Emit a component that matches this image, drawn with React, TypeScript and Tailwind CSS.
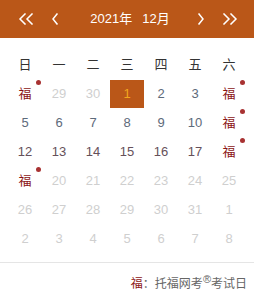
import React from 'react';

type Day = { label: string; muted?: boolean; fu?: boolean; selected?: boolean; tone?: string };

const weekDays = ['日', '一', '二', '三', '四', '五', '六'];

const rows: Day[][] = [
  [
    { label: '福', fu: true },
    { label: '29', muted: true },
    { label: '30', muted: true },
    { label: '1', selected: true },
    { label: '2', tone: 'a' },
    { label: '3', tone: 'a' },
    { label: '福', fu: true },
  ],
  [
    { label: '5', tone: 'a' },
    { label: '6', tone: 'a' },
    { label: '7', tone: 'a' },
    { label: '8', tone: 'a' },
    { label: '9', tone: 'a' },
    { label: '10', tone: 'a' },
    { label: '福', fu: true },
  ],
  [
    { label: '12', tone: 'b' },
    { label: '13', tone: 'b' },
    { label: '14', tone: 'b' },
    { label: '15', tone: 'b' },
    { label: '16', tone: 'b' },
    { label: '17', tone: 'b' },
    { label: '福', fu: true },
  ],
  [
    { label: '福', fu: true },
    ...['20', '21', '22', '23', '24', '25'].map((l) => ({ label: l, muted: true })),
  ],
  ['26', '27', '28', '29', '30', '31', '1'].map((l) => ({ label: l, muted: true })),
  ['2', '3', '4', '5', '6', '7', '8'].map((l) => ({ label: l, muted: true })),
];

const Chevron = ({ dir, double }: { dir: 'l' | 'r'; double?: boolean }) => {
  const w = double ? 16 : 8;
  const flip = dir === 'r' ? `scale(-1,1) translate(-${w},0)` : undefined;
  return (
    <svg width={w} height="12" viewBox={`0 0 ${w} 12`} fill="none">
      <g transform={flip} stroke="white" strokeWidth="1.5" strokeLinecap="square">
        {double ? (
          <>
            <path d="M7 1 L2 6 L7 11" />
            <path d="M14 1 L9 6 L14 11" />
          </>
        ) : (
          <path d="M6 1 L2 6 L6 11" />
        )}
      </g>
    </svg>
  );
};

const Cell = ({ d }: { d: Day }) => {
  let color = 'text-[#666]';
  if (d.muted) color = 'text-[#cfcfcf]';
  if (d.tone === 'a') color = 'text-[#5d6a7a]';
  if (d.tone === 'b') color = 'text-[#66505a]';
  if (d.fu) color = 'text-[#8b1414]';
  return (
    <div className="relative h-[29px] flex items-center justify-center">
      {d.selected ? (
        <div className="w-[34px] h-[28px] bg-[#ba5718] flex items-center justify-center text-[#f2a71e]">
          {d.label}
        </div>
      ) : (
        <span className={color}>{d.label}</span>
      )}
      {d.fu && <span className="absolute left-[28px] top-[1px] w-[5px] h-[5px] rounded-full bg-[#a83232]" />}
    </div>
  );
};

export default function App() {
  return (
    <div
      className="w-[254px] h-[298px] bg-white overflow-hidden text-[13px]"
      style={{ fontFamily: '"Liberation Sans", "Noto Sans CJK SC", sans-serif' }}
    >
      {/* Header */}
      <div className="h-[38px] bg-[#ba5718] flex items-center text-white">
        <div className="w-[18px]" />
        <Chevron dir="l" double />
        <div className="w-[17px]" />
        <Chevron dir="l" />
        <div className="flex-1 flex items-center justify-center gap-[10px] pl-[4px]">
          <span>2021年</span>
          <span>12月</span>
        </div>
        <Chevron dir="r" />
        <div className="w-[17px]" />
        <Chevron dir="r" double />
        <div className="w-[16px]" />
      </div>

      {/* Grid */}
      <div className="px-2 mt-[12px]">
        <div className="grid grid-cols-7">
          {weekDays.map((w) => (
            <div key={w} className="h-[29px] flex items-center justify-center text-[#333]">
              {w}
            </div>
          ))}
        </div>
        {rows.map((r, i) => (
          <div key={i} className="grid grid-cols-7">
            {r.map((d, j) => (
              <Cell key={j} d={d} />
            ))}
          </div>
        ))}
      </div>

      {/* Legend */}
      <div className="mt-[9px] border-t border-[#e5e5e5] pr-[7px] pt-[12px] text-right text-[12px] text-[#666]">
        <span className="text-[#8b1414]">福</span>：托福网考
        <span className="relative -top-[5px] text-[11px] leading-none">®</span>考试日
      </div>
    </div>
  );
}
